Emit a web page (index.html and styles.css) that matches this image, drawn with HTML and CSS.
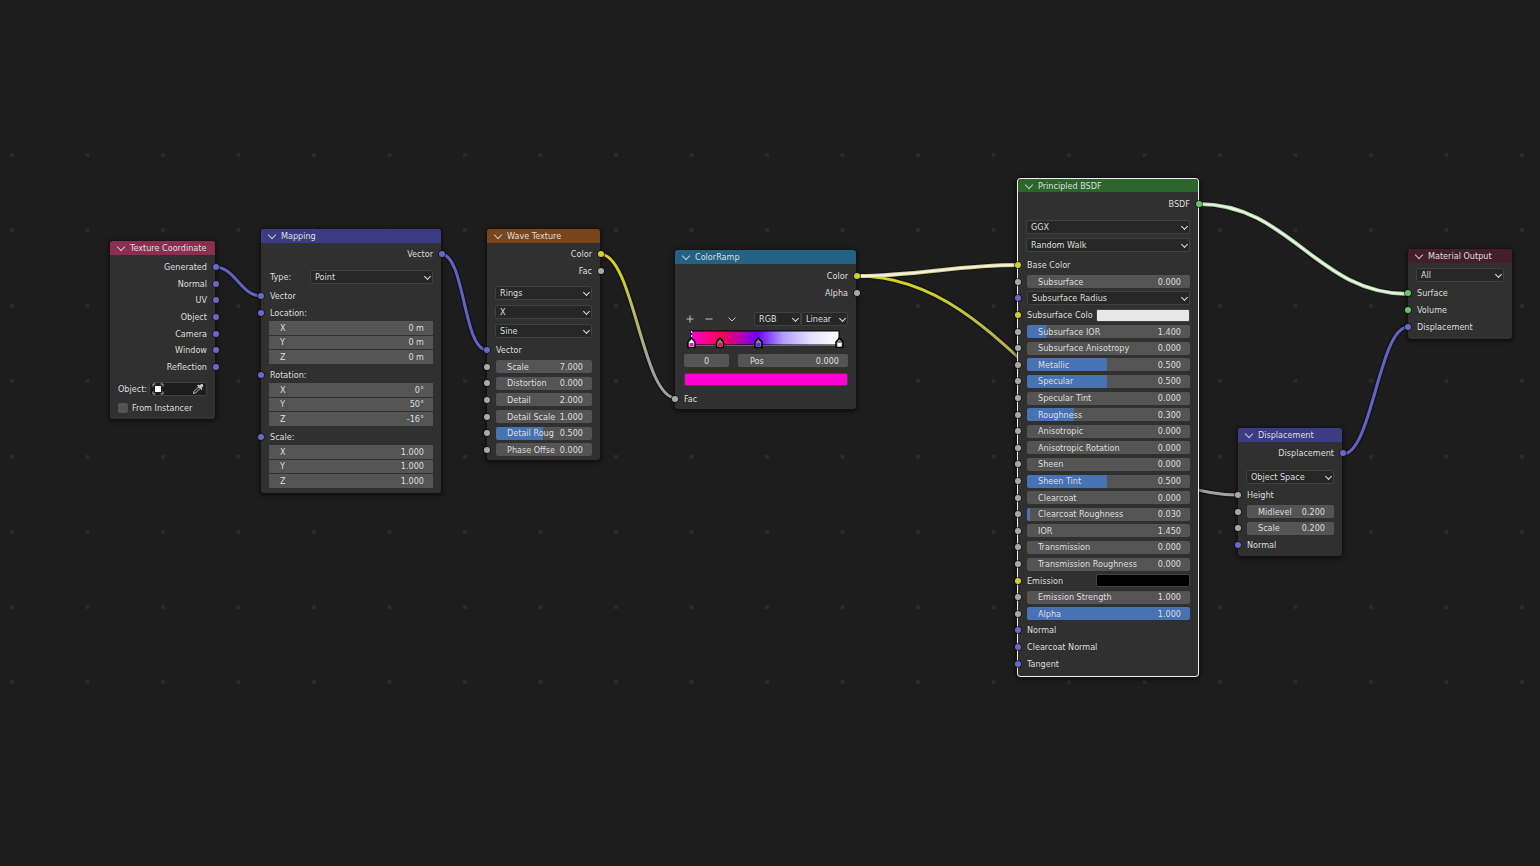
FILE: index.html
```html
<!DOCTYPE html>
<html lang="en">
<head>
<meta charset="utf-8">
<title>Shader Editor</title>
<link rel="stylesheet" href="styles.css">
</head>
<body>
<main class="canvas">
  <svg class="wires" aria-hidden="true">
    <defs>
      <linearGradient id="colorToFac" gradientUnits="userSpaceOnUse" x1="600" y1="254" x2="676" y2="398"><stop offset="0.15" stop-color="#d2d024"/><stop offset="0.75" stop-color="#a1a1a1"/></linearGradient>
      <linearGradient id="colorToHeight" gradientUnits="userSpaceOnUse" x1="857" y1="276" x2="1238" y2="495"><stop offset="0.15" stop-color="#d2d024"/><stop offset="0.45" stop-color="#a8a862"/><stop offset="0.8" stop-color="#a1a1a1"/></linearGradient>
    </defs>
    <g class="grid">
      <path d="M10 155H1540M10 230H1540M10 306H1540M10 381H1540M10 457H1540M10 532H1540M10 607H1540M10 682H1540"/>
    </g>
    <g class="shade">
      <path d="M215 267C235 267 241 296 261 296"/>
      <path d="M441 254C465 254 463 350 487 350"/>
      <path d="M600 254C634 254 642 398 676 398"/>
      <path d="M857 276C1013 276 1082 495 1238 495"/>
      <path d="M857 276C920 276 955 265 1018 265"/>
      <path d="M1199 204C1290 204 1317 294 1408 294"/>
      <path d="M1343 454C1372 454 1379 327 1408 327"/>
    </g>
    <g class="wire">
      <path class="vec" d="M215 267C235 267 241 296 261 296"/>
      <path class="vec" d="M441 254C465 254 463 350 487 350"/>
      <path stroke="url(#colorToFac)" d="M600 254C634 254 642 398 676 398"/>
      <path stroke="url(#colorToHeight)" d="M857 276C1013 276 1082 495 1238 495"/>
      <path class="base" d="M857 276C920 276 955 265 1018 265"/>
      <path class="shader" d="M1199 204C1290 204 1317 294 1408 294"/>
      <path class="vec" d="M1343 454C1372 454 1379 327 1408 327"/>
    </g>
    <g class="core">
      <path d="M857 276C920 276 955 265 1018 265"/>
      <path d="M1199 204C1290 204 1317 294 1408 294"/>
    </g>
  </svg>

  <section class="node texcoord">
    <header class="head"><button class="fold" aria-label="Collapse"></button><h2>Texture Coordinate</h2></header>
    <div class="rows">
      <div class="row out"><i class="dot vec"></i>Generated</div>
      <div class="row out"><i class="dot vec"></i>Normal</div>
      <div class="row out"><i class="dot vec"></i>UV</div>
      <div class="row out"><i class="dot vec"></i>Object</div>
      <div class="row out"><i class="dot vec"></i>Camera</div>
      <div class="row out"><i class="dot vec"></i>Window</div>
      <div class="row out"><i class="dot vec"></i>Reflection</div>
    </div>
    <div class="line object"><span>Object:</span>
      <button class="picker" aria-label="Pick object">
        <svg width="12" height="12" viewBox="0 0 12 12"><rect x="3" y="3" width="6" height="6" fill="#fff"/><path d="M1 3.500V1h2.500M8.500 1H11v2.500M11 8.500V11H8.500M3.500 11H1V8.500" fill="none" stroke="#aaa"/></svg>
        <svg width="12" height="12" viewBox="0 0 12 12"><path d="M1.500 10.500 2 8.500 6.500 4 8 5.500 3.500 10Z" fill="none" stroke="#c4c4c4"/><path d="M5 2.500 9.500 7 10.500 6 9.500 5 11 3.500C12 2 10.500.5 8.800 1.200L7.500 2.500 6.500 1.500Z" fill="#c4c4c4"/></svg>
      </button>
    </div>
    <label class="line check"><input type="checkbox">From Instancer</label>
  </section>

  <section class="node mapping">
    <header class="head"><button class="fold" aria-label="Collapse"></button><h2>Mapping</h2></header>
    <div class="rows"><div class="row out"><i class="dot vec"></i>Vector</div></div>
    <div class="line type"><label for="mapType">Type:</label><span class="select"><select id="mapType"><option>Point</option></select></span></div>
    <div class="row"><i class="dot vec"></i>Vector</div>
    <div class="row"><i class="dot vec"></i>Location:</div>
    <div class="xyz">
      <label class="field"><span>X</span><input value="0 m"></label>
      <label class="field"><span>Y</span><input value="0 m"></label>
      <label class="field"><span>Z</span><input value="0 m"></label>
    </div>
    <div class="row"><i class="dot vec"></i>Rotation:</div>
    <div class="xyz">
      <label class="field"><span>X</span><input value="0°"></label>
      <label class="field"><span>Y</span><input value="50°"></label>
      <label class="field"><span>Z</span><input value="-16°"></label>
    </div>
    <div class="row"><i class="dot vec"></i>Scale:</div>
    <div class="xyz">
      <label class="field"><span>X</span><input value="1.000"></label>
      <label class="field"><span>Y</span><input value="1.000"></label>
      <label class="field"><span>Z</span><input value="1.000"></label>
    </div>
  </section>

  <section class="node wave">
    <header class="head"><button class="fold" aria-label="Collapse"></button><h2>Wave Texture</h2></header>
    <div class="rows">
      <div class="row out"><i class="dot col"></i>Color</div>
      <div class="row out"><i class="dot"></i>Fac</div>
    </div>
    <div class="menus">
      <span class="select"><select aria-label="Wave type"><option>Rings</option></select></span>
      <span class="select"><select aria-label="Direction"><option>X</option></select></span>
      <span class="select"><select aria-label="Profile"><option>Sine</option></select></span>
    </div>
    <div class="rows inputs">
      <div class="row"><i class="dot vec"></i>Vector</div>
      <div class="row"><i class="dot"></i><label class="field"><span>Scale</span><input value="7.000"></label></div>
      <div class="row"><i class="dot"></i><label class="field"><span>Distortion</span><input value="0.000"></label></div>
      <div class="row"><i class="dot"></i><label class="field"><span>Detail</span><input value="2.000"></label></div>
      <div class="row"><i class="dot"></i><label class="field"><span>Detail Scale</span><input value="1.000"></label></div>
      <div class="row"><i class="dot"></i><label class="field" style="--fill:49%"><span>Detail Roug</span><input value="0.500"></label></div>
      <div class="row"><i class="dot"></i><label class="field"><span>Phase Offse</span><input value="0.000"></label></div>
    </div>
  </section>

  <section class="node ramp">
    <header class="head"><button class="fold" aria-label="Collapse"></button><h2>ColorRamp</h2></header>
    <div class="rows">
      <div class="row out"><i class="dot col"></i>Color</div>
      <div class="row out"><i class="dot"></i>Alpha</div>
    </div>
    <div class="line tools">
      <button class="tool" aria-label="Add stop"><svg width="8" height="8" viewBox="0 0 8 8"><path d="M4 .5v7M.5 4h7"/></svg></button>
      <button class="tool" aria-label="Remove stop"><svg width="8" height="8" viewBox="0 0 8 8"><path d="M.5 4h7"/></svg></button>
      <button class="tool more" aria-label="Ramp tools"><svg width="8" height="8" viewBox="0 0 8 8"><path d="M.5 2.500 4 6l3.500-3.500"/></svg></button>
      <span class="select"><select aria-label="Color mode"><option>RGB</option></select></span>
      <span class="select"><select aria-label="Interpolation"><option>Linear</option></select></span>
    </div>
    <svg class="gradient" viewBox="0 0 164 20" role="img" aria-label="Color ramp">
      <defs><linearGradient id="stops"><stop offset="0" stop-color="#ff00d0"/><stop offset=".2" stop-color="#ff0050"/><stop offset=".33" stop-color="#b800a8"/><stop offset=".45" stop-color="#6a00ff"/><stop offset=".62" stop-color="#b09cff"/><stop offset=".8" stop-color="#e4deff"/><stop offset="1" stop-color="#fff"/></linearGradient></defs>
      <rect x="7" y="1" width="148" height="14" fill="url(#stops)" stroke="#000"/>
      <path d="M7.500 15.500h148" stroke="#666"/>
      <path d="M7.500 1v8" stroke="#fff" stroke-dasharray="2 2"/>
      <g stroke="#000" stroke-width="1.500" fill="#888">
        <path d="M4 17.500V12l3.500-4 3.500 4v5.500Z" fill="#fff"/><path d="M32.500 17.500V12l3.500-4 3.500 4v5.500Z"/><path d="M71 17.500V12l3.500-4 3.500 4v5.500Z"/><path d="M152 17.500V12l3.500-4 3.500 4v5.500Z"/>
      </g>
      <rect x="5.500" y="13" width="4" height="3.500" fill="#e815c0"/><rect x="34" y="13" width="4" height="3.500" fill="#ff1048"/><rect x="72.500" y="13" width="4" height="3.500" fill="#6a20ff"/><rect x="153.500" y="13" width="4" height="3.500" fill="#fff"/>
    </svg>
    <div class="line stop">
      <input class="index" aria-label="Stop index" value="0">
      <label class="field"><span>Pos</span><input value="0.000"></label>
    </div>
    <button class="swatch pink" aria-label="Stop color"></button>
    <div class="row"><i class="dot"></i>Fac</div>
  </section>

  <section class="node bsdf">
    <header class="head"><button class="fold" aria-label="Collapse"></button><h2>Principled BSDF</h2></header>
    <div class="rows"><div class="row out"><i class="dot shader"></i>BSDF</div></div>
    <div class="menus">
      <span class="select"><select aria-label="Distribution"><option>GGX</option></select></span>
      <span class="select"><select aria-label="Subsurface method"><option>Random Walk</option></select></span>
    </div>
    <div class="rows inputs">
      <div class="row"><i class="dot col"></i>Base Color</div>
      <div class="row"><i class="dot"></i><label class="field"><span>Subsurface</span><input value="0.000"></label></div>
      <div class="row"><i class="dot vec"></i><span class="select"><select aria-label="Subsurface radius"><option>Subsurface Radius</option></select></span></div>
      <div class="row"><i class="dot col"></i><span class="name">Subsurface Colo</span><button class="swatch white" aria-label="Subsurface color"></button></div>
      <div class="row"><i class="dot"></i><label class="field" style="--fill:12%"><span>Subsurface IOR</span><input value="1.400"></label></div>
      <div class="row"><i class="dot"></i><label class="field"><span>Subsurface Anisotropy</span><input value="0.000"></label></div>
      <div class="row"><i class="dot"></i><label class="field" style="--fill:49%"><span>Metallic</span><input value="0.500"></label></div>
      <div class="row"><i class="dot"></i><label class="field" style="--fill:49%"><span>Specular</span><input value="0.500"></label></div>
      <div class="row"><i class="dot"></i><label class="field"><span>Specular Tint</span><input value="0.000"></label></div>
      <div class="row"><i class="dot"></i><label class="field" style="--fill:29%"><span>Roughness</span><input value="0.300"></label></div>
      <div class="row"><i class="dot"></i><label class="field"><span>Anisotropic</span><input value="0.000"></label></div>
      <div class="row"><i class="dot"></i><label class="field"><span>Anisotropic Rotation</span><input value="0.000"></label></div>
      <div class="row"><i class="dot"></i><label class="field"><span>Sheen</span><input value="0.000"></label></div>
      <div class="row"><i class="dot"></i><label class="field" style="--fill:49%"><span>Sheen Tint</span><input value="0.500"></label></div>
      <div class="row"><i class="dot"></i><label class="field"><span>Clearcoat</span><input value="0.000"></label></div>
      <div class="row"><i class="dot"></i><label class="field" style="--fill:2%"><span>Clearcoat Roughness</span><input value="0.030"></label></div>
      <div class="row"><i class="dot"></i><label class="field"><span>IOR</span><input value="1.450"></label></div>
      <div class="row"><i class="dot"></i><label class="field"><span>Transmission</span><input value="0.000"></label></div>
      <div class="row"><i class="dot"></i><label class="field"><span>Transmission Roughness</span><input value="0.000"></label></div>
      <div class="row"><i class="dot col"></i><span class="name">Emission</span><button class="swatch black" aria-label="Emission color"></button></div>
      <div class="row"><i class="dot"></i><label class="field"><span>Emission Strength</span><input value="1.000"></label></div>
      <div class="row"><i class="dot"></i><label class="field" style="--fill:100%"><span>Alpha</span><input value="1.000"></label></div>
      <div class="row"><i class="dot vec"></i>Normal</div>
      <div class="row"><i class="dot vec"></i>Clearcoat Normal</div>
      <div class="row"><i class="dot vec"></i>Tangent</div>
    </div>
  </section>

  <section class="node displace">
    <header class="head"><button class="fold" aria-label="Collapse"></button><h2>Displacement</h2></header>
    <div class="rows"><div class="row out"><i class="dot vec"></i>Displacement</div></div>
    <div class="menus"><span class="select"><select aria-label="Space"><option>Object Space</option></select></span></div>
    <div class="rows inputs">
      <div class="row"><i class="dot"></i>Height</div>
      <div class="row"><i class="dot"></i><label class="field"><span>Midlevel</span><input value="0.200"></label></div>
      <div class="row"><i class="dot"></i><label class="field"><span>Scale</span><input value="0.200"></label></div>
      <div class="row"><i class="dot vec"></i>Normal</div>
    </div>
  </section>

  <section class="node output">
    <header class="head"><button class="fold" aria-label="Collapse"></button><h2>Material Output</h2></header>
    <div class="menus"><span class="select"><select aria-label="Target"><option>All</option></select></span></div>
    <div class="rows inputs">
      <div class="row"><i class="dot shader"></i>Surface</div>
      <div class="row"><i class="dot shader"></i>Volume</div>
      <div class="row"><i class="dot vec"></i>Displacement</div>
    </div>
  </section>
</main>
</body>
</html>
```
FILE: styles.css
```css
* { box-sizing: border-box; }
body {
  margin: 0;
  background: #1d1d1d;
  color: #dedede;
  font: 9px/12px "DejaVu Sans Condensed", "DejaVu Sans", sans-serif;
}
button, input, select { margin: 0; padding: 0; border: 0; color: inherit; font: inherit; }
button { display: block; background: none; }
.canvas { position: relative; min-height: 100vh; overflow: hidden; }
.wires { position: absolute; inset: 0; width: 100%; height: 100%; fill: none; }
.grid { stroke: #2a2a2a; stroke-width: 4; stroke-dasharray: 4 71.5; }
.shade { stroke: #101010; stroke-width: 6; opacity: .7; }
.wire { stroke-width: 3; }
.wire .vec { stroke: #6262c4; }
.wire .base { stroke: #d5d08c; stroke-width: 4; }
.wire .shader { stroke: #9fd3a2; stroke-width: 4; }
.core { stroke: #f4f2e2; stroke-width: 2; }

/* Nodes are free items on the canvas */
.node {
  position: absolute;
  display: flex;
  flex-direction: column;
  border-radius: 3px;
  background: #303030;
  box-shadow: 0 1px 5px 1px rgba(0, 0, 0, .6);
}
.texcoord { left: 110px; top: 241px; width: 105px; padding-bottom: 4px; }
.mapping { left: 261px; top: 229px; width: 180px; padding-bottom: 2px; }
.wave { left: 487px; top: 229px; width: 113px; padding-bottom: 2px; }
.ramp { left: 675px; top: 250px; width: 181px; padding-bottom: 2px; }
.bsdf { left: 1018px; top: 179px; width: 180px; padding-bottom: 4px; }
.displace { left: 1238px; top: 428px; width: 104px; padding-bottom: 3px; }
.output { left: 1408px; top: 249px; width: 104px; padding-bottom: 4px; }
.bsdf { box-shadow: 0 0 0 1px #f0f0f0, 0 1px 5px 2px rgba(0, 0, 0, .6); }

.head {
  display: flex;
  align-items: center;
  gap: 5px;
  height: 14px;
  padding-left: 7px;
  border-radius: 3px 3px 0 0;
}
.head h2 { margin: 0; font-size: 9px; line-height: 12px; font-weight: normal; white-space: nowrap; }
.texcoord .head { background: #8a2f50; }
.mapping .head, .displace .head { background: #3c3c85; }
.wave .head { background: #79451c; }
.ramp .head { background: #246284; }
.bsdf .head { background: #2b652b; height: 13px; }
.output .head { background: #431f2c; }
.fold { display: flex; justify-content: center; width: 8px; height: 8px; }
.fold::before {
  content: "";
  width: 5px;
  height: 5px;
  border: solid #c8c8c8;
  border-width: 0 1px 1px 0;
  transform: rotate(45deg);
}

.rows { display: grid; grid-auto-rows: 1fr; margin-top: 3px; }
.row {
  position: relative;
  display: flex;
  align-items: center;
  min-height: 16px;
  padding: 0 8px 0 9px;
  white-space: nowrap;
}
.row.out { justify-content: flex-end; }
.dot {
  position: absolute;
  left: -3px;
  top: 50%;
  width: 6px;
  height: 6px;
  margin-top: -3px;
  border-radius: 50%;
  background: #a8a8a8;
  box-shadow: 0 0 0 1px rgba(16, 16, 16, .6);
}
.out .dot { left: auto; right: -4px; }
.dot.vec { background: #6868cc; }
.dot.col { background: #cfcf2c; }
.dot.shader { background: #63c763; }

.field, .index, .swatch { height: 13px; border-radius: 2px; }
.field {
  flex: 1;
  display: flex;
  align-items: center;
  min-width: 0;
  padding: 0 9px 0 11px;
  background: linear-gradient(#4772b3, #4772b3) 0 0 / var(--fill, 0%) 100% no-repeat #545454;
}
.field input { flex: 1; width: 0; min-width: 0; height: 12px; background: none; text-align: right; }
.index { width: 45px; background: #545454; text-align: center; }

.select { position: relative; flex: 1; display: flex; min-width: 0; }
.select select {
  appearance: none;
  width: 100%;
  height: 14px;
  padding: 0 4px;
  border: 1px solid #404040;
  border-radius: 2px;
  background: #272727;
}
.select::after {
  content: "";
  position: absolute;
  right: 3px;
  top: 4px;
  width: 4px;
  height: 4px;
  border: solid #dedede;
  border-width: 0 1px 1px 0;
  transform: rotate(45deg);
  pointer-events: none;
}
.menus { display: flex; flex-direction: column; gap: 5px; padding: 0 8px; }
.line { display: flex; align-items: center; padding: 0 8px; }

.texcoord .rows { min-height: 116px; margin-top: 4px; }
.object { height: 14px; margin-top: 7px; gap: 2px; white-space: nowrap; }
.picker {
  flex: 1;
  display: flex;
  align-items: center;
  justify-content: space-between;
  height: 14px;
  padding: 0 2px;
  border: 1px solid #404040;
  border-radius: 2px;
  background: #1d1d1d;
}
.check { height: 14px; margin-top: 5px; gap: 4px; }
.check input { appearance: none; width: 10px; height: 10px; border-radius: 2px; background: #545454; }

.type { margin: 8px 0 4px; }
.type label { width: 41px; padding-left: 1px; }
.mapping .row + .row { min-height: 17px; }
.xyz { display: grid; grid-auto-rows: 1fr; gap: 1px; height: 43px; margin: 0 8px 3px; }
.xyz .field { height: auto; border-radius: 0; }

.wave .rows, .ramp .rows { min-height: 33px; }
.wave .menus { margin-top: 7px; }
.wave .inputs { min-height: 116px; margin-top: 4px; }

.ramp .rows { margin-top: 4px; }
.tools { height: 14px; margin-top: 11px; padding-left: 11px; }
.tool { margin-right: 11px; }
.tool.more { margin: 0 18px 0 4px; }
.tool svg { display: block; fill: none; stroke: #c4c4c4; }
.gradient { display: block; margin: 4px 8px 0 9px; }
.stop { gap: 9px; margin-top: 4px; padding-left: 9px; }
.stop .field { padding: 0 9px 0 12px; }
.swatch { flex: 1; border: 1px solid #444; }
.pink { flex: none; margin: 6px 8px 5px 9px; background: #ff00d4; }
.white { background: #e7e7e7; }
.black { background: #000; }
.name { width: 69px; }

.bsdf .rows { margin-top: 4px; }
.bsdf .menus { gap: 4px; margin-top: 8px; }
.bsdf .inputs { min-height: 415px; margin-top: 5px; }

.displace .menus { margin-top: 9px; }
.displace .inputs { min-height: 66px; margin-top: 3px; }

.output .menus { margin-top: 5px; }
.output .inputs { min-height: 50px; margin-top: 3px; }
```
